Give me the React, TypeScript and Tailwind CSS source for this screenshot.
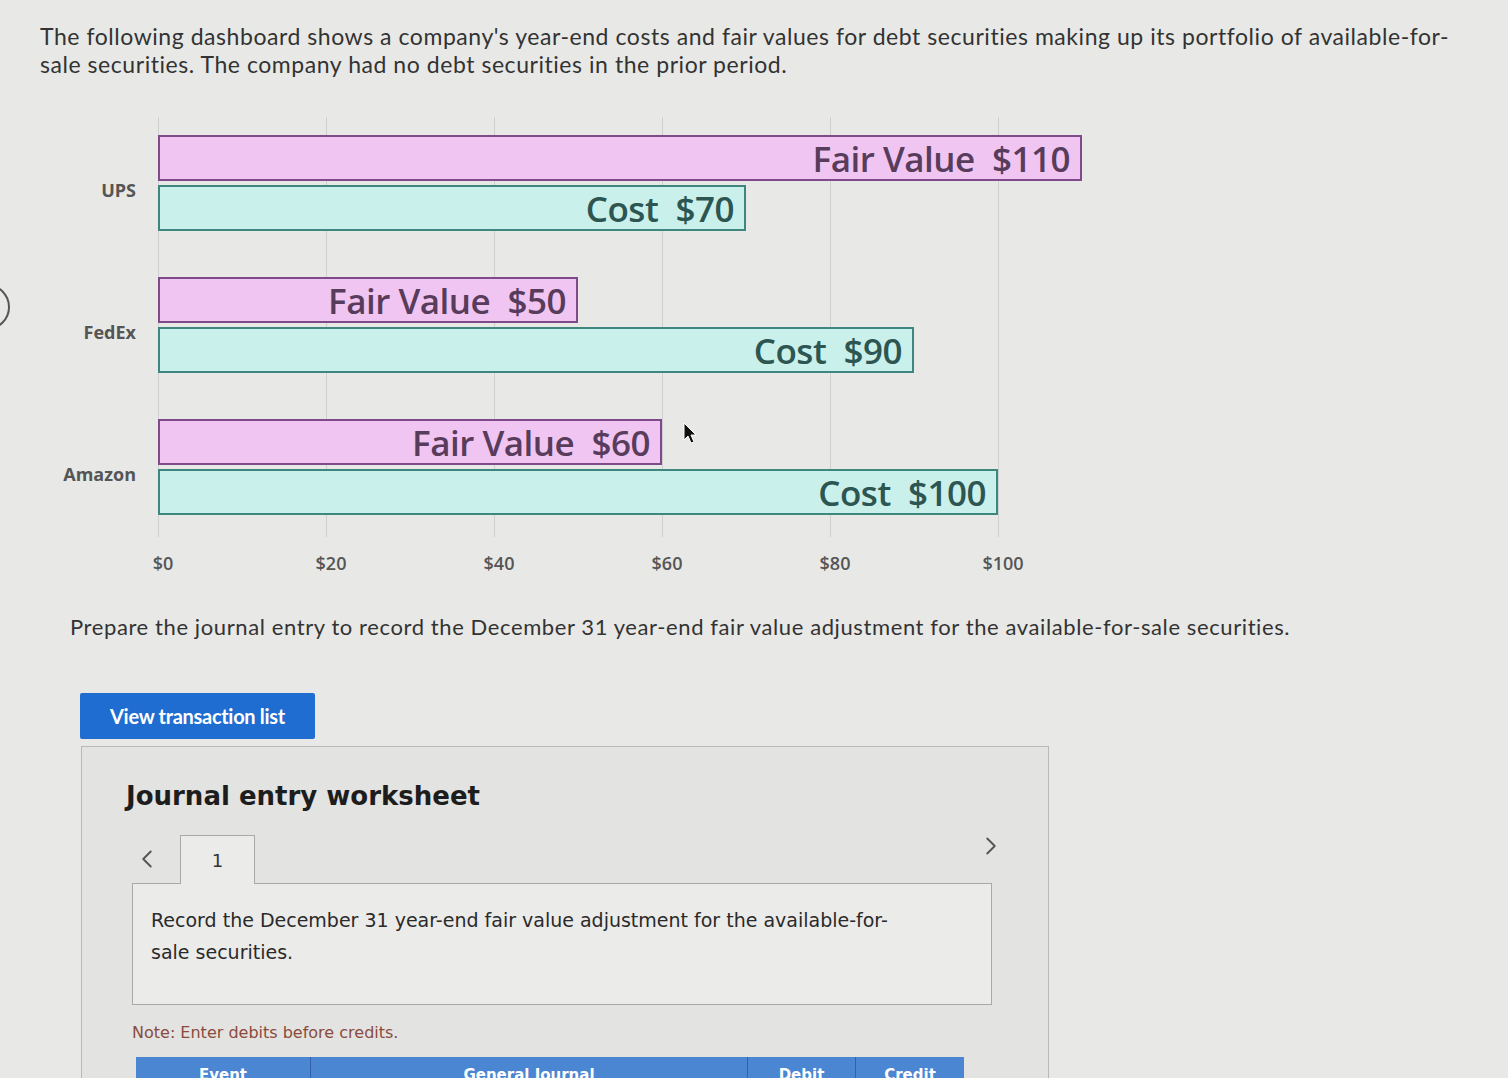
import React from 'react';
import { ChevronLeft, ChevronRight } from 'lucide-react';

const PX_PER_DOLLAR = 8.4;
const TICKS = [0, 20, 40, 60, 80, 100];

type Company = { name: string; fairValue: number; cost: number };

const companies: Company[] = [
  { name: 'UPS', fairValue: 110, cost: 70 },
  { name: 'FedEx', fairValue: 50, cost: 90 },
  { name: 'Amazon', fairValue: 60, cost: 100 },
];

const Bar = ({ label, value, kind }: { label: string; value: number; kind: 'fv' | 'cost' }) => {
  const styles =
    kind === 'fv'
      ? 'bg-[#f1c5f1] border-[#7e4a8a] text-[#583c5c]'
      : 'bg-[#c9f0ea] border-[#3f877e] text-[#2d5551]';
  return (
    <div
      className={`flex h-[46px] items-center justify-end border-2 pr-[10px] ${styles}`}
      style={{ width: value * PX_PER_DOLLAR }}
    >
      <span className="whitespace-pre text-[35px] font-semibold leading-none tracking-[-0.5px] [font-family:'Open_Sans',sans-serif]">
        {label}  ${value}
      </span>
    </div>
  );
};

const Chart = () => (
  <div className="mt-[39px]">
    <div className="relative pb-[22px] pt-[18px]">
      {/* gridlines */}
      <div className="absolute inset-y-0 left-[118px] w-[940px]">
        {TICKS.map((t) => (
          <div
            key={t}
            className="absolute inset-y-0 w-px bg-[#cfcfcf]"
            style={{ left: t * PX_PER_DOLLAR }}
          />
        ))}
      </div>
      <div className="relative flex flex-col gap-[46px]">
        {companies.map((c) => (
          <div key={c.name} className="flex">
            <div className="flex w-[118px] items-center justify-end pr-[22px] pt-[14px] text-[18px] font-bold text-[#555] [font-family:'Open_Sans',sans-serif]">
              {c.name}
            </div>
            <div className="flex flex-col gap-[4px]">
              <Bar label="Fair Value" value={c.fairValue} kind="fv" />
              <Bar label="Cost" value={c.cost} kind="cost" />
            </div>
          </div>
        ))}
      </div>
    </div>
    <div className="ml-[39px] mt-[14px] flex">
      {TICKS.map((t) => (
        <div
          key={t}
          className="w-[168px] text-center text-[18px] font-semibold leading-[24px] text-[#555] [font-family:'Open_Sans',sans-serif]"
        >
          ${t}
        </div>
      ))}
    </div>
  </div>
);

const Worksheet = () => (
  <div className="ml-[41px] mt-[7px] min-h-[360px] w-[968px] border border-[#b9b9b7] bg-[#e3e3e1] pl-[50px] pr-[56px] pt-[34px] [font-family:'DejaVu_Sans',sans-serif]">
    <h2 className="-ml-[6px] text-[26px] font-bold leading-[30px] text-[#1d1d1d]">Journal entry worksheet</h2>
    <div className="mt-[12px] flex items-end">
      <div className="flex h-[48px] w-[48px] items-center text-[#555]">
        <ChevronLeft size={30} strokeWidth={1.5} />
      </div>
      <div className="relative z-10 -mb-px flex h-[49px] w-[75px] items-center justify-center border border-b-0 border-[#a9a9a7] bg-[#ebebea] text-[18px] text-[#333]">
        1
      </div>
      <div className="-mr-[14px] ml-auto flex h-[60px] items-start pt-[8px] text-[#555]">
        <ChevronRight size={30} strokeWidth={1.5} />
      </div>
    </div>
    <div className="h-[122px] border border-[#a9a9a7] bg-[#ebebea] px-[18px] pt-[20px] text-[19px] leading-[32px] text-[#2a2a2a]">
      Record the December 31 year-end fair value adjustment for the available-for-
      <br />
      sale securities.
    </div>
    <p className="mt-[16px] text-[16px] leading-[24px] text-[#8a4b3c]">Note: Enter debits before credits.</p>
    <div className="ml-[4px] mt-[12px] flex h-[36px] w-[828px] bg-[#4a86d2] text-[15px] font-bold text-white">
      <div className="flex w-[175px] items-center justify-center border-r border-[#2f62a8]">Event</div>
      <div className="flex w-[437px] items-center justify-center border-r border-[#2f62a8]">General Journal</div>
      <div className="flex w-[108px] items-center justify-center border-r border-[#2f62a8]">Debit</div>
      <div className="flex w-[108px] items-center justify-center">Credit</div>
    </div>
  </div>
);

export default function App() {
  return (
    <div className="relative min-h-[1078px] overflow-hidden bg-[#e8e8e6] px-[40px] pt-[22px] text-[#333] [font-family:Lato,sans-serif]">
      {/* partial scroll button at the left edge */}
      <div className="absolute left-[-36px] top-[284px] h-[46px] w-[46px] rounded-full border-2 border-[#555]" />
      {/* mouse pointer */}
      <svg className="absolute left-[683px] top-[422px]" width="16" height="24" viewBox="0 0 16 24">
        <path d="M1 1 L1 18 L5 14 L8 21 L11 20 L8 13 L13 13 Z" fill="#111" stroke="#fff" strokeWidth="1" />
      </svg>

      <p className="text-[23px] leading-[28px] tracking-[0.55px]">
        The following dashboard shows a company's year-end costs and fair values for debt securities making up its portfolio of available-for-
        <br />
        sale securities. The company had no debt securities in the prior period.
      </p>

      <Chart />

      <p className="ml-[30px] mt-[38px] text-[22px] leading-[28px] tracking-[0.6px]">
        Prepare the journal entry to record the December 31 year-end fair value adjustment for the available-for-sale securities.
      </p>

      <button className="ml-[40px] mt-[52px] flex h-[46px] w-[235px] items-center justify-center rounded-[2px] bg-[#1f6dd1] text-[20px] font-bold tracking-[-0.3px] text-white">
        View transaction list
      </button>

      <Worksheet />
    </div>
  );
}
